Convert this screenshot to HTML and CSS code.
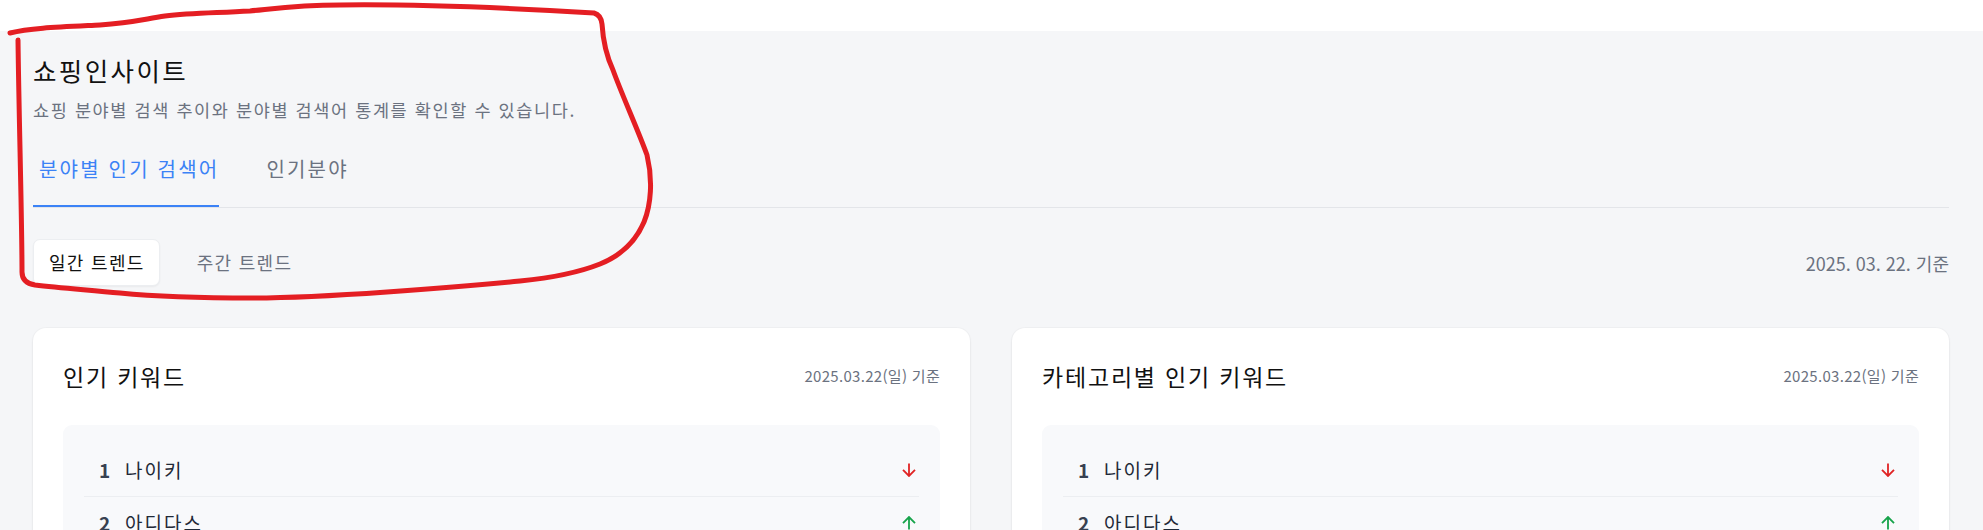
FILE: index.html
```html
<!DOCTYPE html>
<html lang="ko">
<head>
<meta charset="utf-8">
<title>쇼핑인사이트</title>
<link rel="stylesheet" href="styles.css">
</head>
<body>
<div class="topbar"></div>
<main class="page">
  <header class="page-head">
    <h1 class="page-title">쇼핑인사이트</h1>
    <p class="page-desc">쇼핑 분야별 검색 추이와 분야별 검색어 통계를 확인할 수 있습니다.</p>
  </header>

  <nav class="tabs">
    <button class="tab tab-active">분야별 인기 검색어</button>
    <button class="tab">인기분야</button>
  </nav>

  <div class="toolbar">
    <div class="segment">
      <button class="seg seg-active">일간 트렌드</button>
      <button class="seg">주간 트렌드</button>
    </div>
    <span class="basis">2025. 03. 22. 기준</span>
  </div>

  <section class="cards">
    <article class="card">
      <div class="card-head">
        <h2 class="card-title">인기 키워드</h2>
        <span class="card-date">2025.03.22(일) 기준</span>
      </div>
      <ol class="rank">
        <li class="rank-item"><span class="rank-no">1</span><span class="rank-name">나이키</span><svg class="arrow down" viewBox="0 0 14 14"><path d="M7 0.5V13M1 6.8L7 13L13 6.8"/></svg></li>
        <li class="rank-item"><span class="rank-no">2</span><span class="rank-name">아디다스</span><svg class="arrow up" viewBox="0 0 14 14"><path d="M7 13.5V1M1 7.2L7 1L13 7.2"/></svg></li>
        <li class="rank-item"><span class="rank-no">3</span><span class="rank-name">뉴발란스</span><svg class="arrow up" viewBox="0 0 14 14"><path d="M7 13.5V1M1 7.2L7 1L13 7.2"/></svg></li>
        <li class="rank-item"><span class="rank-no">4</span><span class="rank-name">아식스</span><svg class="arrow down" viewBox="0 0 14 14"><path d="M7 0.5V13M1 6.8L7 13L13 6.8"/></svg></li>
        <li class="rank-item"><span class="rank-no">5</span><span class="rank-name">푸마</span><svg class="arrow up" viewBox="0 0 14 14"><path d="M7 13.5V1M1 7.2L7 1L13 7.2"/></svg></li>
      </ol>
    </article>

    <article class="card">
      <div class="card-head">
        <h2 class="card-title">카테고리별 인기 키워드</h2>
        <span class="card-date">2025.03.22(일) 기준</span>
      </div>
      <ol class="rank">
        <li class="rank-item"><span class="rank-no">1</span><span class="rank-name">나이키</span><svg class="arrow down" viewBox="0 0 14 14"><path d="M7 0.5V13M1 6.8L7 13L13 6.8"/></svg></li>
        <li class="rank-item"><span class="rank-no">2</span><span class="rank-name">아디다스</span><svg class="arrow up" viewBox="0 0 14 14"><path d="M7 13.5V1M1 7.2L7 1L13 7.2"/></svg></li>
        <li class="rank-item"><span class="rank-no">3</span><span class="rank-name">뉴발란스</span><svg class="arrow up" viewBox="0 0 14 14"><path d="M7 13.5V1M1 7.2L7 1L13 7.2"/></svg></li>
        <li class="rank-item"><span class="rank-no">4</span><span class="rank-name">아식스</span><svg class="arrow down" viewBox="0 0 14 14"><path d="M7 0.5V13M1 6.8L7 13L13 6.8"/></svg></li>
        <li class="rank-item"><span class="rank-no">5</span><span class="rank-name">푸마</span><svg class="arrow up" viewBox="0 0 14 14"><path d="M7 13.5V1M1 7.2L7 1L13 7.2"/></svg></li>
      </ol>
    </article>
  </section>
</main>

<svg class="scribble" viewBox="0 0 700 320" width="700" height="320" aria-hidden="true">
  <path d="M10 33 C30 28 60 27 100 25 C130 23 140 20 165 16 C190 13 215 13 250 11 C280 8 300 5 340 5 C420 4 510 8 594 13 Q601 15 602 24 C603 40 606 55 613 70 C622 95 638 130 647 155 C653 180 651 205 644 222 C635 243 620 256 600 264 C580 272 550 278 520 281 C480 285 430 289 387 292 C330 296 280 298 253 298 C200 298 150 296 120 293 C90 290 60 288 35 285 Q22 283 22 272 C22 220 19 120 18 40"/>
</svg>
</body>
</html>
```

FILE: styles.css
```css
html {
  scrollbar-width: none;
}
html::-webkit-scrollbar {
  display: none;
}
body {
  margin: 0;
  background: #f5f6f8;
  font-family: "Noto Sans CJK KR", "Noto Sans", sans-serif;
  color: #111827;
}
.topbar {
  height: 31px;
  background: #ffffff;
}
.page {
  padding: 22px 34px 40px 33px;
}
.page-title {
  margin: 0;
  font-size: 25.5px;
  line-height: 34px;
  font-weight: 400;
  letter-spacing: 2.4px;
  color: #111111;
}
.page-desc {
  margin: 10px 0 0;
  font-size: 17.5px;
  line-height: 26px;
  letter-spacing: 1.6px;
  color: #6b7280;
}
.tabs {
  display: flex;
  gap: 41px;
  margin-top: 20px;
  border-bottom: 1px solid #e3e5e9;
}
.tab {
  background: none;
  border: 0;
  border-bottom: 2px solid transparent;
  padding: 12px 0 22px 6px;
  font-family: inherit;
  font-size: 20px;
  line-height: 28px;
  letter-spacing: 2.2px;
  color: #6b7280;
}
.tab-active {
  color: #3b82f6;
  border-bottom-color: #3b82f6;
}
.toolbar {
  display: flex;
  align-items: center;
  justify-content: space-between;
  margin-top: 31px;
}
.segment {
  display: flex;
  gap: 21px;
}
.seg {
  background: none;
  border: 1px solid transparent;
  border-radius: 7px;
  padding: 10px 14px 10px 15px;
  font-family: inherit;
  font-size: 18px;
  line-height: 25px;
  letter-spacing: 1.3px;
  color: #6b7280;
}
.seg-active {
  background: #ffffff;
  border-color: #eceef1;
  color: #111111;
  box-shadow: 0 1px 2px rgba(0, 0, 0, 0.05);
}
.basis {
  font-size: 18px;
  line-height: 26px;
  color: #6b7280;
}
.cards {
  display: grid;
  grid-template-columns: 1fr 1fr;
  gap: 42px;
  margin-top: 42px;
}
.card {
  background: #ffffff;
  border-radius: 13px;
  padding: 30px;
  box-shadow: 0 1px 3px rgba(0, 0, 0, 0.06), 0 0 0 1px rgba(0, 0, 0, 0.02);
}
.card-head {
  display: flex;
  align-items: center;
  justify-content: space-between;
  height: 36px;
}
.card-title {
  margin: 0;
  font-size: 23px;
  line-height: 36px;
  font-weight: 400;
  letter-spacing: 1.8px;
  color: #111111;
}
.card-date {
  font-size: 15px;
  line-height: 22px;
  letter-spacing: 0.3px;
  color: #6b7280;
}
.rank {
  list-style: none;
  margin: 31px 0 0;
  padding: 19px 21px;
  background: #f8f9fb;
  border-radius: 9px;
}
.rank-item {
  display: flex;
  align-items: center;
  padding: 12px 3px 12px 15px;
  border-bottom: 1px solid #eceef1;
}
.rank-no {
  width: 26px;
  font-size: 19px;
  line-height: 28px;
  font-weight: 700;
  color: #374151;
}
.rank-name {
  flex: 1;
  font-size: 19px;
  line-height: 28px;
  letter-spacing: 2px;
  color: #1f2937;
}
.arrow {
  width: 14px;
  height: 14px;
  fill: none;
  stroke-width: 1.8;
}
.arrow.down {
  stroke: #e02424;
}
.arrow.up {
  stroke: #16a34a;
}
.scribble {
  position: absolute;
  top: 0;
  left: 0;
  pointer-events: none;
  fill: none;
  stroke: #e41e23;
  stroke-width: 5;
  stroke-linecap: round;
  stroke-linejoin: round;
}
```
